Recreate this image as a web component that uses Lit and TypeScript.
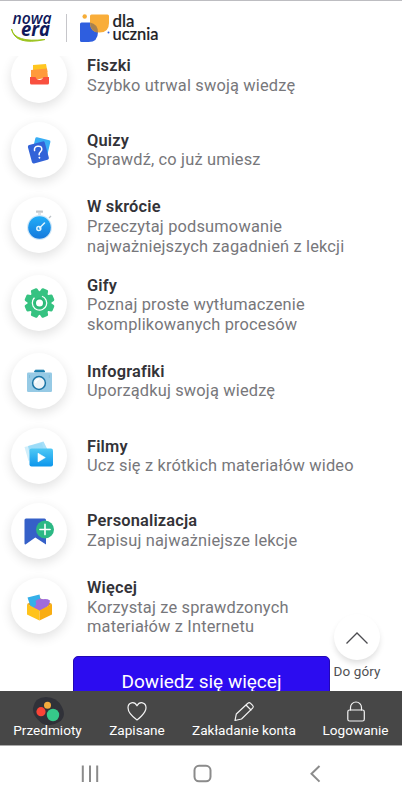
import { LitElement, html, css, svg, TemplateResult } from 'lit';
import { customElement, property } from 'lit/decorators.js';

interface Feature {
  icon: string;
  title: string;
  lines: string[];
}

const FEATURES: Feature[] = [
  { icon: 'cards', title: 'Fiszki', lines: ['Szybko utrwal swoją wiedzę'] },
  { icon: 'quiz', title: 'Quizy', lines: ['Sprawdź, co już umiesz'] },
  { icon: 'timer', title: 'W skrócie', lines: ['Przeczytaj podsumowanie', 'najważniejszych zagadnień z lekcji'] },
  { icon: 'gear', title: 'Gify', lines: ['Poznaj proste wytłumaczenie', 'skomplikowanych procesów'] },
  { icon: 'camera', title: 'Infografiki', lines: ['Uporządkuj swoją wiedzę'] },
  { icon: 'film', title: 'Filmy', lines: ['Ucz się z krótkich materiałów wideo'] },
  { icon: 'bookmark', title: 'Personalizacja', lines: ['Zapisuj najważniejsze lekcje'] },
  { icon: 'box', title: 'Więcej', lines: ['Korzystaj ze sprawdzonych', 'materiałów z Internetu'] },
];

// all feature icons are drawn on the 56x56 circle
const ICONS: Record<string, TemplateResult> = {
  cards: svg`
    <path d="M22 18l13-1 1.500 8H22z" fill="#ffc620" />
    <path d="M20 23l16-1.500 1 9-17 3z" fill="#ff9a3c" />
    <path d="M19 30h5.500q1 3 4 3t4-3H38v6q0 1.500-1.500 1.500h-16Q19 37.500 19 36z" fill="#f9503f" />`,
  quiz: svg`
    <rect x="22.500" y="16.500" width="15.500" height="17" rx="1.500" transform="rotate(13 30 25)" fill="#38aef5" />
    <rect x="18.500" y="21" width="17.500" height="19" rx="1.800" transform="rotate(-15 27 30)" fill="#3263d8" />
    <g transform="rotate(-8 27.500 30)" fill="none" stroke="#fff" stroke-width="1.500" stroke-linecap="round">
      <path d="M23.800 28q-.2-3.800 3.700-3.800t3.700 3.300c0 2.500-3.500 2.500-3.500 5.300" />
      <path d="M27.600 35.700v.1" stroke-width="1.900" />
    </g>`,
  timer: svg`
    <rect x="25" y="13.500" width="7" height="2.300" rx=".5" fill="#c3c8cc" />
    <path d="M28.500 16v2" stroke="#dfe3e6" stroke-width="3" />
    <path d="M38 21l2-2" stroke="#bcc2c7" stroke-width="1.300" />
    <circle cx="28.500" cy="30.500" r="12.500" fill="#cfe7f8" />
    <circle cx="28.500" cy="30.500" r="11.300" fill="url(#blue)" />
    <path d="M28.500 31l5-5" stroke="#dff5ff" stroke-width="1.500" stroke-linecap="round" />
    <circle cx="27.800" cy="31.500" r="2" fill="none" stroke="#dff5ff" stroke-width="1.500" />`,
  gear: svg`
    <g fill="#36c281">
      <circle cx="28.500" cy="28" r="11.800" />
      ${[22.5, 67.5, 112.5, 157.5, 202.5, 247.5, 292.5, 337.5].map(
        (a) => svg`<path d="M24.200 18l.8-4q.3-1 1.300-1h4.400q1 0 1.300 1l.8 4z" transform="rotate(${a} 28.500 28)" />`
      )}
    </g>
    <circle cx="28.500" cy="28" r="7.200" fill="none" stroke="#fff" stroke-width="1.200" stroke-dasharray="37 8.200" transform="rotate(-70 28.500 28)" />
    <circle cx="28.500" cy="28" r="5.200" fill="#2bb878" />
    <circle cx="28.500" cy="28" r="3.500" fill="#fff" />`,
  camera: svg`
    <path d="M23.500 19l.8-1.800h8.600l.8 1.800z" fill="#1b7fae" stroke="#1b7fae" stroke-linejoin="round" />
    <rect x="16" y="19.500" width="25" height="19.500" rx="1.200" fill="#96cae5" />
    <path d="M18.500 22v3M38.300 22v3" stroke="#7fbddb" />
    <circle cx="28" cy="30" r="6.400" fill="#eef4f7" stroke="#1a74a5" stroke-width="1.500" />
    <path d="M24.500 30a3.700 3.700 0 0 1 3.700-3.700" fill="none" stroke="#fff" stroke-width="1.500" />`,
  film: svg`
    <path d="M13.500 19l17-4 4 10-17 8z" fill="#d0eefa" />
    <path d="M17 18l15.500-4.500 5 10-17 9z" fill="#8bd6f7" opacity=".75" />
    <rect x="18.500" y="20.500" width="23.500" height="18" rx="2" fill="url(#sky)" />
    <path d="M27 25.200v8.700l7.300-4.300z" fill="#fff" stroke="#fff" stroke-width=".6" stroke-linejoin="round" />`,
  bookmark: svg`
    <path d="M13.500 17q0-1.500 1.500-1.500h18.500q1.500 0 1.500 1.500v24.500l-10.700-7-9.800 7q-1 0-1-1z" fill="#3560c8" />
    <circle cx="34" cy="26.500" r="9" fill="#2cb884" />
    <path d="M34 21.400v10.200M28.900 26.500h10.200" stroke="#fff" stroke-width="1.600" stroke-linecap="round" />`,
  box: svg`
    <path d="M16 26l12.500-6 12.500 6-12.500 7z" fill="#e99c10" />
    <path d="M16.500 19.500l12-3 1 5 1 9-7 1-4-3z" fill="#35afe9" />
    <path d="M24.500 23q4-3.500 7.500-1.800 4-.7 7 1.300-.5 4.500-4 7l-6.500 3.500-6-3.500q4-2.500 2-6.500z" fill="#a06bdb" />
    <path d="M16 26l12.500 6.500V42.500L16 36.500z" fill="#ffc31c" />
    <path d="M41 26l-12.500 6.500V42.500L41 36.500z" fill="#f9ad12" />`,
};

@customElement('feature-row')
export class FeatureRow extends LitElement {
  static styles = css`
    :host {
      display: flex;
      align-items: flex-start;
      gap: 20px;
      margin-bottom: 18.8px;
    }
    .circle {
      flex: none;
      width: 56px;
      height: 56px;
      border-radius: 50%;
      background: #fff;
      box-shadow: 0 4px 12px rgba(0, 0, 0, 0.12);
    }
    svg {
      display: block;
    }
    .text {
      min-height: 56px;
      display: flex;
      flex-direction: column;
      justify-content: center;
      padding-top: 0.6px;
      box-sizing: border-box;
      font-size: 16.4px;
      line-height: 19.6px;
      letter-spacing: 0.17px;
      white-space: nowrap;
      color: #77777b;
    }
    .title {
      font-weight: 600;
      color: #333338;
    }
  `;

  @property({ attribute: false }) feature!: Feature;

  render() {
    return html`
      <div class="circle">
        <svg width="56" height="56" viewBox="0 0 56 56">
          <defs>
            <linearGradient id="blue" x2="0" y2="1">
              <stop stop-color="#22aef8" />
              <stop offset="1" stop-color="#1478dc" />
            </linearGradient>
            <linearGradient id="sky" x2="0" y2="1">
              <stop stop-color="#4fc9f5" />
              <stop offset="1" stop-color="#0c96ec" />
            </linearGradient>
          </defs>
          ${ICONS[this.feature.icon]}
        </svg>
      </div>
      <div class="text">
        <div class="title">${this.feature.title}</div>
        ${this.feature.lines.map((line) => html`<div>${line}</div>`)}
      </div>
    `;
  }
}

@customElement('app-root')
export class AppRoot extends LitElement {
  static styles = css`
    :host {
      display: flex;
      flex-direction: column;
      position: relative;
      width: 402px;
      height: 800px;
      overflow: hidden;
      background: #fff;
      font-family: Roboto, 'Liberation Sans', sans-serif;
    }
    svg {
      display: block;
    }
    header {
      flex: none;
      height: 56px;
      box-sizing: border-box;
      border-top: 1px solid #bdbdc1;
      background: #fff;
      z-index: 1;
    }
    .brand {
      font-family: 'Open Sans', sans-serif;
      font-style: italic;
      fill: #10195a;
    }
    .product {
      font-family: Lato, sans-serif;
      font-weight: 500;
      fill: #202024;
      stroke: #202024;
      stroke-width: 0.2;
    }
    main {
      flex: 1;
      min-height: 0;
      overflow: hidden;
    }
    .features {
      margin-top: -8.8px;
      padding-left: 11px;
    }
    .cta {
      display: block;
      width: 257px;
      height: 51px;
      margin: 0 0 0 73px;
      padding: 0;
      border: 1px solid #2208b4;
      border-radius: 5px;
      background: #2c0cf0;
      color: #fff;
      font: 19px Roboto, sans-serif;
      letter-spacing: 0;
    }
    .to-top {
      position: absolute;
      left: 327px;
      top: 614px;
      width: 60px;
      display: flex;
      flex-direction: column;
      align-items: center;
      font-size: 13.5px;
      line-height: 16px;
      letter-spacing: 0.1px;
      color: #505054;
    }
    .to-top div {
      width: 46px;
      height: 46px;
      margin-bottom: 3px;
      border-radius: 50%;
      background: #fff;
      box-shadow: 0 4px 6px -1px rgba(0, 0, 0, 0.14);
    }
    nav {
      flex: none;
      height: 55px;
      display: grid;
      grid-template-columns: 95px 84px 130px 93px;
      background: #474747;
      border-bottom: 1px solid #aaa;
      box-sizing: border-box;
      color: #fff;
      font-size: 13.6px;
      line-height: 16px;
    }
    .tab {
      display: flex;
      flex-direction: column;
      align-items: center;
      padding-top: 5px;
      white-space: nowrap;
    }
    .tab svg {
      margin-bottom: -4px;
    }
    .line {
      fill: none;
      stroke: #f4f4f4;
      stroke-width: 1.2;
      stroke-linejoin: round;
      stroke-linecap: round;
    }
    .system {
      flex: none;
      height: 54px;
      background: #fff;
    }
    .keys {
      fill: none;
      stroke: #8b8b8b;
      stroke-width: 2;
    }
  `;

  private _tab(label: string, icon: TemplateResult) {
    return html`
      <div class="tab">
        <svg width="32" height="30" viewBox="0 0 32 30">${icon}</svg>
        <span>${label}</span>
      </div>
    `;
  }

  render() {
    return html`
      <header>
        <svg width="200" height="53" viewBox="0 1 200 53">
          <text class="brand" x="12.500" y="23.500" font-size="17" font-weight="600" textLength="39" lengthAdjust="spacingAndGlyphs">nowa</text>
          <text class="brand" x="21" y="35.500" font-size="19" font-weight="700" textLength="29" lengthAdjust="spacingAndGlyphs">era</text>
          <path d="M11.500 29q3 14 33.500 10.500-30 6.500-33.500-10.500z" fill="#9bc31c" stroke="#9bc31c" />
          <path d="M66.500 14v28" stroke="#c6c6ca" />
          <circle cx="84.700" cy="16.500" r="2.200" fill="#f6ad37" />
          <path d="M80 24q0-1.500 1.500-1.500H90q8 1.500 8 9.500 0 10-9.500 10h-7Q80 42 80 40.500z" fill="#2e5edf" />
          <path d="M90 16q0-1.500 1.500-1.500h16q1.500 0 1.500 1.500v7q0 9.500-9.500 9.500T90 23z" fill="#f9ad39" />
          <path d="M90 22.500q8 1.500 8 10-7.500-1-8-10z" fill="#a9824e" />
          <circle cx="108.500" cy="32.500" r="1" fill="#2e5edf" />
          <text class="product" x="112.500" y="27.300" font-size="16.500" textLength="22" lengthAdjust="spacingAndGlyphs">dla</text>
          <text class="product" x="112.500" y="40" font-size="16.500" textLength="46" lengthAdjust="spacingAndGlyphs">ucznia</text>
        </svg>
      </header>
      <main>
        <div class="features">
          ${FEATURES.map((f) => html`<feature-row .feature=${f}></feature-row>`)}
        </div>
        <button class="cta">Dowiedz się więcej</button>
      </main>
      <div class="to-top">
        <div>
          <svg width="46" height="46" viewBox="0 0 46 46">
            <path d="M12.500 29.500L23 19l10.500 10.500" fill="none" stroke="#4c4c50" stroke-width="1.300" />
          </svg>
        </div>
        Do góry
      </div>
      <nav>
        ${this._tab(
          'Przedmioty',
          svg`
            <path d="M1 12Q3 1 14 1t16 10-3 15-16 2S0 21 1 12z" fill="#303138" />
            <circle cx="15.500" cy="9.300" r="3.500" fill="#f4ac3d" />
            <circle cx="9" cy="15.700" r="4.600" fill="#fb4436" />
            <circle cx="21" cy="19" r="6.200" fill="#36c98a" />`
        )}
        ${this._tab(
          'Zapisane',
          svg`<path class="line" d="M16 24Q7 17.500 7 11.800C7 6 13.500 5 16 9.800 18.500 5 25 6 25 11.800 25 17.500 16 24 16 24z" />`
        )}
        ${this._tab(
          'Zakładanie konta',
          svg`<path class="line" d="M7 24.500l1.300-6.500L19.800 7.300q1.400-1.400 2.800 0l2 2q1.400 1.400 0 2.800L13.500 23zM18 9l5 5" />`
        )}
        ${this._tab(
          'Logowanie',
          svg`
            <rect class="line" x="7.800" y="14" width="16.500" height="11" rx="1.800" />
            <path class="line" d="M10.500 14v-2.500a5.500 5.500 0 0 1 11 0V14" />`
        )}
      </nav>
      <div class="system">
        <svg width="402" height="54" viewBox="0 746 402 54">
          <g class="keys">
            <path d="M82.800 765.500v16.500M90 765.500v16.500M97.200 765.500v16.500" />
            <rect x="194.500" y="765.800" width="16" height="15.500" rx="4.500" />
            <path d="M319.500 766l-8 7.800 8 7.800" />
          </g>
        </svg>
      </div>
    `;
  }
}
